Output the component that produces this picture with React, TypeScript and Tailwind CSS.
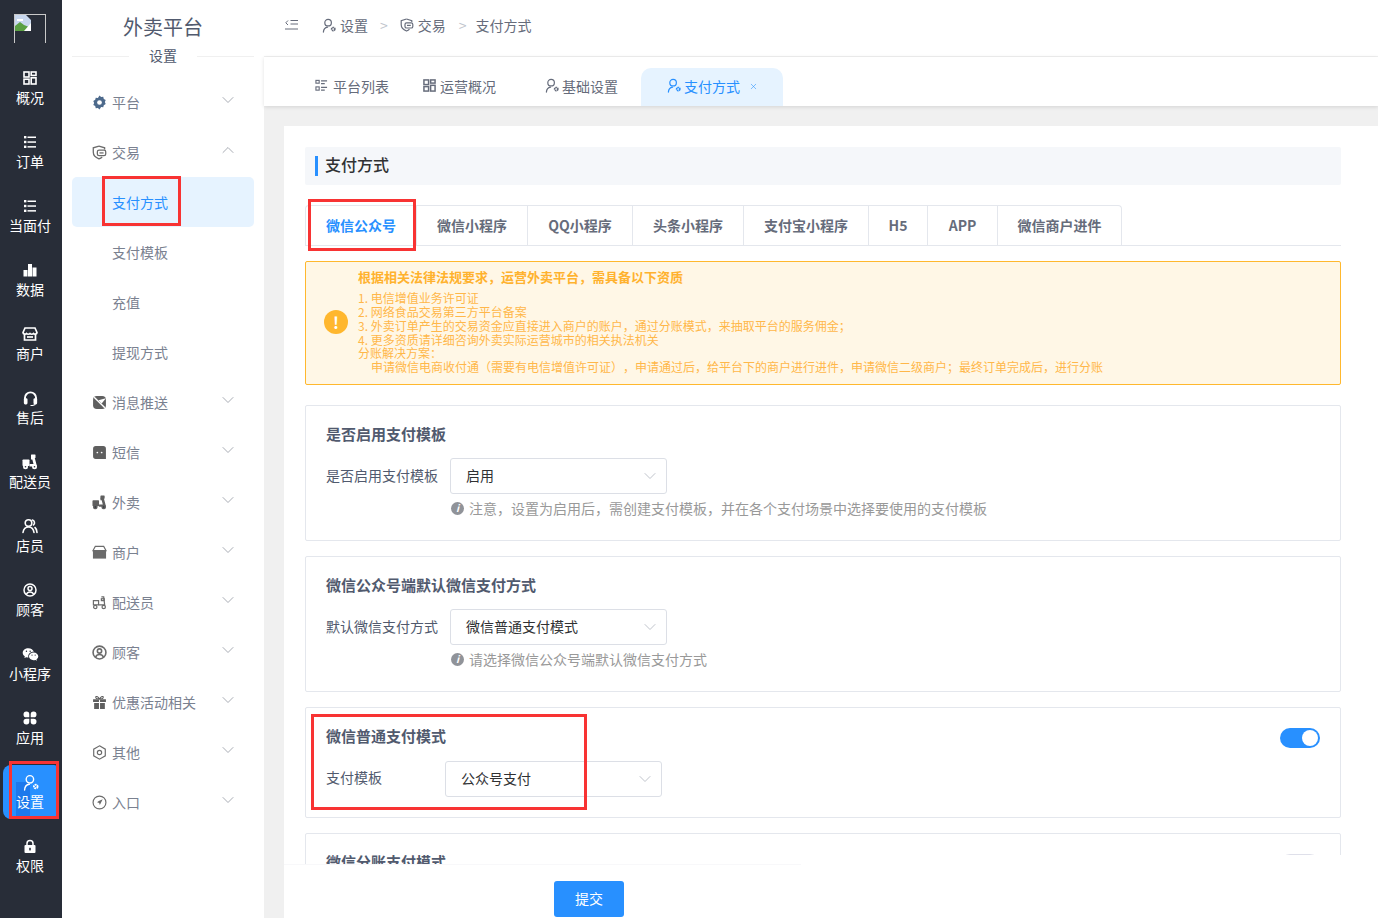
import React from 'react';
import { ChevronDown, ChevronUp, X } from 'lucide-react';
import { RiWechatFill } from 'react-icons/ri';

type IconProps = { className?: string };

const GridIcon = ({ className }: IconProps) => (
  <svg viewBox="0 0 14 14" className={className} fill="none" stroke="currentColor" strokeWidth="1.6">
    <rect x="1" y="1" width="5" height="5" />
    <rect x="8.2" y="1" width="4.8" height="3.4" />
    <rect x="1" y="8.2" width="5" height="4.8" />
    <rect x="8.2" y="6.8" width="4.8" height="6.2" />
  </svg>
);

const ListIcon = ({ className }: IconProps) => (
  <svg viewBox="0 0 14 14" className={className} fill="currentColor">
    <rect x="1" y="1" width="2.4" height="2.4" />
    <rect x="1" y="5.8" width="2.4" height="2.4" />
    <rect x="1" y="10.6" width="2.4" height="2.4" />
    <rect x="4.5" y="1.500" width="8.5" height="1.500" />
    <rect x="4.5" y="6.300" width="8.5" height="1.500" />
    <rect x="4.5" y="11.100" width="8.5" height="1.500" />
  </svg>
);

const BarsIcon = ({ className }: IconProps) => (
  <svg viewBox="0 0 14 14" className={className} fill="currentColor">
    <rect x="0.5" y="7" width="4" height="6.5" />
    <rect x="5" y="1" width="4" height="12.5" />
    <rect x="9.5" y="4.5" width="4" height="9" />
  </svg>
);

const StoreIcon = ({ className }: IconProps) => (
  <svg viewBox="0 0 16 16" className={className} fill="none" stroke="currentColor" strokeWidth="1.700">
    <path d="M3 2h10l2 4.500a2 2 0 0 1-3.500 1 2.400 2.400 0 0 1-3.500 0 2.400 2.400 0 0 1-3.500 0A2 2 0 0 1 1 6.500z" />
    <path d="M2.500 8.500V14h11V8.500" />
    <path d="M5 11h6" />
  </svg>
);

const StoreFillIcon = ({ className }: IconProps) => (
  <svg viewBox="0 0 16 16" className={className} fill="currentColor">
    <path d="M3.500 1.500h9l2.500 4.500H1z" fill="none" stroke="currentColor" strokeWidth="1.200" />
    <path d="M1 6h14v8.500H1z" />
  </svg>
);

const HeadsetIcon = ({ className }: IconProps) => (
  <svg viewBox="0 0 14 14" className={className} fill="none" stroke="currentColor">
    <path d="M1.800 8V6.500a5.200 5.200 0 0 1 10.400 0V8" strokeWidth="1.800" />
    <rect x="0.800" y="6.800" width="3.400" height="5.700" rx="1.200" fill="currentColor" stroke="none" />
    <rect x="9.800" y="6.800" width="3.400" height="5.700" rx="1.200" fill="currentColor" stroke="none" />
    <path d="M11.500 12.500 9 13.500H7" strokeWidth="1" />
  </svg>
);

const ScooterIcon = ({ className }: IconProps) => (
  <svg viewBox="0 0 16 16" className={className} fill="currentColor">
    <rect x="0.500" y="5.500" width="7" height="6.500" rx="0.800" />
    <path d="M9 3h3.500L15 12.500H7.500V10h4L10.300 5.500H9z" />
    <rect x="9" y="0.500" width="4.500" height="3.500" rx="0.500" />
    <circle cx="3.500" cy="12.800" r="2.500" />
    <circle cx="12.500" cy="12.800" r="2.500" />
    <circle cx="3.500" cy="12.800" r="0.800" fill="#282d38" />
    <circle cx="12.500" cy="12.800" r="0.800" fill="#282d38" />
  </svg>
);

const ScooterLineIcon = ({ className }: IconProps) => (
  <svg viewBox="0 0 16 16" className={className} fill="none" stroke="currentColor" strokeWidth="1.300">
    <rect x="1.500" y="6" width="5.500" height="4.500" />
    <path d="M10 2h2.500l1 8.500H7" />
    <rect x="10" y="4" width="3" height="2" />
    <circle cx="3.500" cy="12.800" r="1.800" />
    <circle cx="12.500" cy="12.800" r="1.800" />
  </svg>
);

const UsersIcon = ({ className }: IconProps) => (
  <svg viewBox="0 0 16 16" className={className} fill="none" stroke="currentColor" strokeWidth="1.600" strokeLinecap="round">
    <circle cx="6.500" cy="5" r="3.300" />
    <path d="M1 14.500c.5-3.500 2.500-5.500 5.500-5.500s5 2 5.500 5.500" />
    <path d="M10.500 2c2 .4 2.800 3.500 1 5" />
    <path d="M13 9.500c1.200.9 1.800 2.600 2 5" />
  </svg>
);

const UserCircleIcon = ({ className }: IconProps) => (
  <svg viewBox="0 0 14 14" className={className} fill="none" stroke="currentColor" strokeWidth="1.500">
    <circle cx="7" cy="7" r="6" />
    <circle cx="7" cy="5.600" r="2" />
    <path d="M3.300 11.500c.7-1.800 2-2.600 3.700-2.600s3 .8 3.700 2.600" />
  </svg>
);

const CloverIcon = ({ className }: IconProps) => (
  <svg viewBox="0 0 14 14" className={className} fill="currentColor">
    <path d="M6.300 6.300H3.500a2.900 2.900 0 1 1 2.800-2.800z" />
    <path d="M7.700 6.300V3.500a2.900 2.900 0 1 1 2.800 2.800z" />
    <path d="M6.300 7.700v2.800a2.900 2.900 0 1 1-2.800-2.800z" />
    <path d="M7.700 7.700h2.800a2.900 2.900 0 1 1-2.800 2.800z" />
  </svg>
);

const UserGearIcon = ({ className }: IconProps) => (
  <svg viewBox="0 0 16 16" className={className} fill="none" stroke="currentColor" strokeWidth="1.300">
    <circle cx="6.500" cy="5" r="3.500" />
    <path d="M1.500 15c.2-3 2-5 4.500-5.300" strokeLinecap="round" />
    <circle cx="12" cy="11.800" r="1.700" strokeWidth="1.800" strokeDasharray="1.600 0.500" />
  </svg>
);

const LockIcon = ({ className }: IconProps) => (
  <svg viewBox="0 0 14 14" className={className}>
    <path d="M4 6.500V4.500a3 3 0 0 1 6 0v2" fill="none" stroke="currentColor" strokeWidth="1.500" />
    <rect x="1.500" y="6" width="11" height="8" rx="1" fill="currentColor" />
    <rect x="6.200" y="8.800" width="1.600" height="2.600" fill="#282d38" />
  </svg>
);

const GearFillIcon = ({ className }: IconProps) => (
  <svg viewBox="0 0 14 14" className={className}>
    <path d="M7 .5l1.500 1.400 2-.2.500 2 1.800 1-.8 1.900.8 1.900-1.800 1-.5 2-2-.2L7 13.500l-1.500-1.400-2 .2-.5-2-1.800-1 .8-1.900-.8-1.900 1.800-1 .5-2 2 .2z" fill="currentColor" />
    <circle cx="7" cy="7" r="2.200" fill="#fff" />
  </svg>
);

const ShieldIcon = ({ className }: IconProps) => (
  <svg viewBox="0 0 14 14" className={className} fill="none" stroke="currentColor" strokeWidth="1.200">
    <path d="M6.500 1 1.200 2.600v4.200c0 3 2.300 5 5.300 6.200 1.200-.4 2.200-1 3-1.800" />
    <path d="M6.500 1l5.300 1.600v1.500" />
    <rect x="5" y="4.800" width="7.800" height="5.200" rx="1.600" fill="#fff" />
    <path d="M7 7.400h3.800" />
  </svg>
);

const PushIcon = ({ className }: IconProps) => (
  <svg viewBox="0 0 14 14" className={className} fill="currentColor">
    <rect x="1" y="1" width="12" height="12" rx="3.500" />
    <path d="M2 2 12 12" stroke="#fff" strokeWidth="1.300" />
    <path d="M13 3 6 5 9 8z" fill="#fff" />
  </svg>
);

const SmsIcon = ({ className }: IconProps) => (
  <svg viewBox="0 0 14 14" className={className}>
    <path d="M3.500 1h7A2.500 2.500 0 0 1 13 3.500v9.500H3.500A2.500 2.500 0 0 1 1 10.500v-7A2.500 2.500 0 0 1 3.500 1z" fill="currentColor" />
    <circle cx="5" cy="7" r="0.800" fill="#fff" />
    <circle cx="9" cy="7" r="0.800" fill="#fff" />
  </svg>
);

const GiftIcon = ({ className }: IconProps) => (
  <svg viewBox="0 0 14 14" className={className} fill="currentColor">
    <path d="M1 4h5.500v2.500H1zM7.500 4H13v2.500H7.500zM2 7.500h4.500V13H2zM7.500 7.500H12V13H7.500z" />
    <path d="M7 3.800C5.500 1 3.500.8 3.500 2.200S5 3.800 7 3.800c2 0 3.500-.2 3.500-1.600S8.500 1 7 3.800z" fill="none" stroke="currentColor" />
  </svg>
);

const HexIcon = ({ className }: IconProps) => (
  <svg viewBox="0 0 14 14" className={className} fill="none" stroke="currentColor" strokeWidth="1.100">
    <path d="M7 .8l5.400 3.100v6.200L7 13.200 1.600 10.100V3.900z" />
    <circle cx="7" cy="7" r="2" />
  </svg>
);

const CompassIcon = ({ className }: IconProps) => (
  <svg viewBox="0 0 14 14" className={className} fill="none" stroke="currentColor" strokeWidth="1.100">
    <circle cx="7" cy="7" r="6" />
    <path d="M10 4 6.300 5.500 4.700 6.800l2 .6.600 2z" fill="currentColor" stroke="none" />
  </svg>
);

const CollapseIcon = ({ className }: IconProps) => (
  <svg viewBox="0 0 14 14" className={className} fill="none" stroke="currentColor" strokeWidth="1">
    <path d="M3 2.500 .8 4.800 3 7" />
    <path d="M5.500 2.500H13M5.500 6H13M0 11h13" />
  </svg>
);

const ListGridIcon = ({ className }: IconProps) => (
  <svg viewBox="0 0 14 14" className={className} fill="none" stroke="currentColor" strokeWidth="1.200">
    <rect x="1" y="1.500" width="3.500" height="3" />
    <rect x="1" y="8.500" width="3.500" height="3.500" />
    <path d="M6.500 2h6.500M6.500 5h4M6.500 9h6.500M6.500 12h4" />
  </svg>
);

const BrokenImage = () => (
  <div className="relative h-[29px] w-8 border border-b-0 border-[#c9c9c9]">
    <svg viewBox="0 0 16 16" className="absolute left-0 top-0 h-4 w-4">
      <path d="M0 0h11l5 5v11H0z" fill="#c8d7ee" />
      <path d="M0 11l5-4 4 3 5 2v4H0z" fill="#5aa043" />
      <path d="M9 16 16 8v8z" fill="#fff" />
      <path d="M2 4h6v2H2z" fill="#fff" />
    </svg>
  </div>
);

const railItems = [
  { label: '概况', icon: GridIcon, size: 'h-[14px] w-[14px]' },
  { label: '订单', icon: ListIcon, size: 'h-[14px] w-[14px]' },
  { label: '当面付', icon: ListIcon, size: 'h-[14px] w-[14px]' },
  { label: '数据', icon: BarsIcon, size: 'h-[14px] w-[14px]' },
  { label: '商户', icon: StoreIcon, size: 'h-4 w-4' },
  { label: '售后', icon: HeadsetIcon, size: 'h-[15px] w-[15px]' },
  { label: '配送员', icon: ScooterIcon, size: 'h-4 w-4' },
  { label: '店员', icon: UsersIcon, size: 'h-4 w-4' },
  { label: '顾客', icon: UserCircleIcon, size: 'h-[14px] w-[14px]' },
  { label: '小程序', icon: RiWechatFill, size: 'h-[17px] w-[17px]' },
  { label: '应用', icon: CloverIcon, size: 'h-[14px] w-[14px]' },
  { label: '设置', icon: UserGearIcon, size: 'ml-[2px] h-[17px] w-[17px]', active: true },
  { label: '权限', icon: LockIcon, size: 'h-[14px] w-[14px]' },
];

const menuItems = [
  { label: '平台', icon: GearFillIcon, tint: 'text-[#4d6a8c]' },
  { label: '交易', icon: ShieldIcon, open: true, tint: 'text-[#6b6b6b]' },
  { label: '支付方式', sub: true, active: true },
  { label: '支付模板', sub: true },
  { label: '充值', sub: true },
  { label: '提现方式', sub: true },
  { label: '消息推送', icon: PushIcon, tint: 'text-[#5f5f5f]' },
  { label: '短信', icon: SmsIcon, tint: 'text-[#5f5f5f]' },
  { label: '外卖', icon: ScooterIcon, tint: 'text-[#5f5f5f]' },
  { label: '商户', icon: StoreFillIcon, tint: 'text-[#6b6b6b]' },
  { label: '配送员', icon: ScooterLineIcon, tint: 'text-[#6b6b6b]' },
  { label: '顾客', icon: UserCircleIcon, tint: 'text-[#6b6b6b]' },
  { label: '优惠活动相关', icon: GiftIcon, tint: 'text-[#5f5f5f]' },
  { label: '其他', icon: HexIcon, tint: 'text-[#6b6b6b]' },
  { label: '入口', icon: CompassIcon, tint: 'text-[#6b6b6b]' },
];

const payTabs = [
  { label: '微信公众号', w: 'w-[110px]', active: true },
  { label: '微信小程序', w: 'w-[111px]' },
  { label: 'QQ小程序', w: 'w-[105px]' },
  { label: '头条小程序', w: 'w-[111px]' },
  { label: '支付宝小程序', w: 'w-[125px]' },
  { label: 'H5', w: 'w-[59px]' },
  { label: 'APP', w: 'w-[70px]' },
  { label: '微信商户进件', w: 'w-[124px]' },
];

const Select = ({ value }: { value: string }) => (
  <div className="flex h-9 w-[217px] items-center justify-between rounded-[3px] border border-[#dcdfe6] pl-[15px] pr-[6px] text-sm text-[#303133]">
    <span className="-translate-y-[1.500px]">{value}</span>
    <ChevronDown className="h-5 w-5 text-[#c0c4cc]" strokeWidth={1.2} />
  </div>
);

const Hint = ({ text }: { text: string }) => (
  <div className="mt-[4px] flex h-5 items-center pl-[125px] text-sm text-[#999]">
    <span className="mr-[5px] flex h-[13px] w-[13px] items-center justify-center rounded-full bg-[#909399] text-[10px] font-bold italic leading-none text-white">i</span>
    {text}
  </div>
);

export default function App() {
  return (
    <div className="relative flex h-[918px] w-[1378px] overflow-hidden bg-[#f0f0f0] font-['Noto_Sans_CJK_SC','Liberation_Sans',sans-serif] text-sm text-[#515a6e] [text-spacing-trim:space-all]">
      {/* icon rail */}
      <aside className="flex w-[62px] shrink-0 flex-col bg-[#282d38] text-white">
        <div className="flex h-[62px] justify-center pr-[2px] pt-[14px]">
          <BrokenImage />
        </div>
        {railItems.map((item) => {
          const Icon = item.icon;
          return (
            <div key={item.label} className="relative flex h-16 flex-col items-center pr-[2px] pt-[9px]">
              {item.active && <div className="absolute left-[3px] right-[5px] -top-px h-[54px] rounded-l-[8px] rounded-r-[3px] bg-[#2890ff]" />}
              {item.active && <div className="absolute left-[16px] top-[16px] h-[34px] w-[14px] bg-[#1d78ec]" />}
              <div className="relative flex h-[14px] items-center justify-center">
                <Icon className={`shrink-0 ${item.size}`} />
              </div>
              <span className="relative mt-[1.500px] text-sm leading-5">{item.label}</span>
            </div>
          );
        })}
      </aside>

      {/* second level menu */}
      <aside className="w-[202px] shrink-0 bg-white px-[10px]">
        <div className="flex h-[42px] items-end justify-center pb-px text-xl leading-7 text-[#515a6e]">外卖平台</div>
        <div className="flex h-[29px] items-center justify-center">
          <div className="h-px flex-1 bg-[#f0f0f0]" />
          <span className="-translate-y-[2px] px-5 text-sm">设置</span>
          <div className="h-px flex-1 bg-[#f0f0f0]" />
        </div>
        <div className="mt-[6px]">
          {menuItems.map((item) => {
            const Icon = item.icon;
            return (
              <div
                key={item.label}
                className={`relative flex h-[50px] items-center rounded-[5px] pl-[20px] pr-[16px] ${item.active ? 'bg-[#e6f3ff] text-[#2890ff]' : 'text-[#7a8190]'}`}
              >
                {Icon && <Icon className={`mr-[5px] h-[15px] w-[15px] ${item.tint ?? ''}`} />}
                {item.sub && <span className="w-5" />}
                <span>{item.label}</span>
                {!item.sub && (
                  <span className="ml-auto -translate-y-[2px] text-[#a9adb5]">
                    {item.open ? <ChevronUp className="h-5 w-5" strokeWidth={1.2} /> : <ChevronDown className="h-5 w-5" strokeWidth={1.2} />}
                  </span>
                )}
              </div>
            );
          })}
        </div>
      </aside>

      <main className="flex min-w-0 flex-1 flex-col">
        {/* breadcrumb */}
        <div className="flex h-[57px] items-center border-b border-[#f0f0f0] bg-white pb-[6px] pl-[21px] text-sm text-[#666c7b]">
          <CollapseIcon className="mr-[23px] h-[14px] w-[14px]" />
          <UserGearIcon className="mr-[3px] h-[15px] w-[15px]" />
          <span>设置</span>
          <span className="ml-[12px] mr-[12px] text-[#c0c4cc]">&gt;</span>
          <ShieldIcon className="mr-[4px] h-[14px] w-[14px]" />
          <span>交易</span>
          <span className="ml-[13px] mr-[9px] text-[#c0c4cc]">&gt;</span>
          <span>支付方式</span>
        </div>

        {/* page tabs */}
        <div className="z-10 flex h-[49px] items-end bg-white pl-[51px] text-sm text-[#666c7b] shadow-[0_1px_4px_rgba(0,0,0,0.12)]">
          <div className="flex h-[38px] w-[108px] items-center pb-[3px]">
            <ListGridIcon className="mr-[5px] h-[13px] w-[13px]" />
            平台列表
          </div>
          <div className="flex h-[38px] w-[122px] items-center pb-[3px]">
            <GridIcon className="mr-[4px] h-[13px] w-[13px]" />
            运营概况
          </div>
          <div className="flex h-[38px] w-[96px] items-center pb-[3px]">
            <UserGearIcon className="mr-[2px] h-[15px] w-[15px]" />
            基础设置
          </div>
          <div className="flex h-[38px] w-[142px] items-center rounded-t-[10px] bg-[#e6f3ff] pb-[3px] pl-[26px] text-[#2890ff]">
            <UserGearIcon className="mr-[2px] h-[15px] w-[15px]" />
            支付方式
            <X className="ml-[9px] mt-[2px] h-[9px] w-[9px]" strokeWidth={1.5} />
          </div>
        </div>

        {/* content */}
        <div className="relative ml-5 mt-5 min-h-0 flex-1 bg-white">
          <div className="h-[739px] overflow-hidden pl-[21px] pr-[37px] pt-[21px]">
            <div className="flex h-[38px] items-center rounded-[2px] bg-[#f5f7fa] pb-[4px] pl-[10px] text-base font-medium text-[#303133]">
              <span className="mr-[7px] mt-[4px] h-5 w-[3px] bg-[#2890ff]" />
              支付方式
            </div>

            <div className="mt-5 flex h-[41px] border-b border-[#e4e7ed] text-sm font-bold text-[#666c7b]">
              <div className="flex overflow-hidden rounded-t-[4px] border border-b-0 border-[#e4e7ed]">
                {payTabs.map((tab) => (
                  <div
                    key={tab.label}
                    className={`flex h-10 items-center justify-center border-l border-[#e4e7ed] pb-[2px] first:border-l-0 ${tab.w} ${tab.active ? 'text-[#2890ff]' : ''}`}
                  >
                    {tab.label}
                  </div>
                ))}
              </div>
            </div>

            <div className="mt-[15px] flex h-[124px] items-center rounded-[2px] border border-[#ffb82e] bg-[#fff7e6] pl-[18px] text-xs leading-[13.8px] text-[#ffb74a]">
              <span className="mb-[2px] mr-[10px] flex h-6 w-6 shrink-0 items-center justify-center rounded-full bg-[#ffb72e] text-base font-bold text-white">!</span>
              <div className="pb-[5px]">
                <div className="mb-[4px] text-[13px] font-bold leading-5 text-[#ffb22e]">根据相关法律法规要求，运营外卖平台，需具备以下资质</div>
                <div>1. 电信增值业务许可证</div>
                <div>2. 网络食品交易第三方平台备案</div>
                <div>3. 外卖订单产生的交易资金应直接进入商户的账户，通过分账模式，来抽取平台的服务佣金；</div>
                <div>4. 更多资质请详细咨询外卖实际运营城市的相关执法机关</div>
                <div>分账解决方案：</div>
                <div className="pl-[13px]">申请微信电商收付通（需要有电信增值许可证），申请通过后，给平台下的商户进行进件，申请微信二级商户；最终订单完成后，进行分账</div>
              </div>
            </div>

            <section className="mt-5 h-[136px] rounded-[2px] border border-[#e4e7ed] px-5 pt-[18px]">
              <h3 className="text-[15px] font-bold leading-5 text-[#515a6e]">是否启用支付模板</h3>
              <div className="mt-[14px] flex items-center">
                <span className="w-[124px] -translate-y-px text-sm">是否启用支付模板</span>
                <Select value="启用" />
              </div>
              <Hint text="注意，设置为启用后，需创建支付模板，并在各个支付场景中选择要使用的支付模板" />
            </section>

            <section className="mt-[15px] h-[136px] rounded-[2px] border border-[#e4e7ed] px-5 pt-[18px]">
              <h3 className="text-[15px] font-bold leading-5 text-[#515a6e]">微信公众号端默认微信支付方式</h3>
              <div className="mt-[14px] flex items-center">
                <span className="w-[124px] -translate-y-px text-sm">默认微信支付方式</span>
                <Select value="微信普通支付模式" />
              </div>
              <Hint text="请选择微信公众号端默认微信支付方式" />
            </section>

            <section className="mt-[15px] h-[111px] rounded-[2px] border border-[#e4e7ed] px-5 pt-[18px]">
              <div className="flex items-start justify-between">
                <h3 className="text-[15px] font-bold leading-5 text-[#515a6e]">微信普通支付模式</h3>
                <span className="mt-[2px] flex h-5 w-10 items-center justify-end rounded-full bg-[#2890ff] pr-[2px]">
                  <span className="h-4 w-4 rounded-full bg-white" />
                </span>
              </div>
              <div className="mt-[13px] flex items-center">
                <span className="w-[119px] -translate-y-[2px] text-sm">支付模板</span>
                <Select value="公众号支付" />
              </div>
            </section>

            <section className="mt-[15px] h-[111px] rounded-[2px] border border-[#e4e7ed] px-5 pt-[18px]">
              <div className="flex items-start justify-between">
                <h3 className="text-[15px] font-bold leading-5 text-[#515a6e]">微信分账支付模式</h3>
                <span className="mt-[2px] h-5 w-10 rounded-full bg-[#dfe0ea]" />
              </div>
            </section>
          </div>

          {/* submit bar */}
          <div className="relative flex h-[53px] items-start bg-white pl-[270px] pt-[16px]">
            <div className="absolute -top-[10px] left-[517px] right-0 h-[10px] bg-white" />
            <div className="absolute -top-px left-0 h-px w-[517px] bg-[#f8f8fa]" />
            <button className="h-9 w-[70px] rounded-[3px] bg-[#2890ff] pb-[2px] text-sm text-white">提交</button>
          </div>
        </div>
      </main>

      {/* red annotation boxes */}
      <div className="absolute left-[102px] top-[176px] h-[50px] w-[79px] border-[3px] border-[#f83333]" />
      <div className="absolute left-[308px] top-[199px] h-[52px] w-[108px] border-[3px] border-[#f83333]" />
      <div className="absolute left-[311px] top-[714px] h-[96px] w-[276px] border-[3px] border-[#f83333]" />
      <div className="absolute left-[9px] top-[761px] h-[58px] w-[50px] border-[3px] border-[#f83333]" />
    </div>
  );
}
